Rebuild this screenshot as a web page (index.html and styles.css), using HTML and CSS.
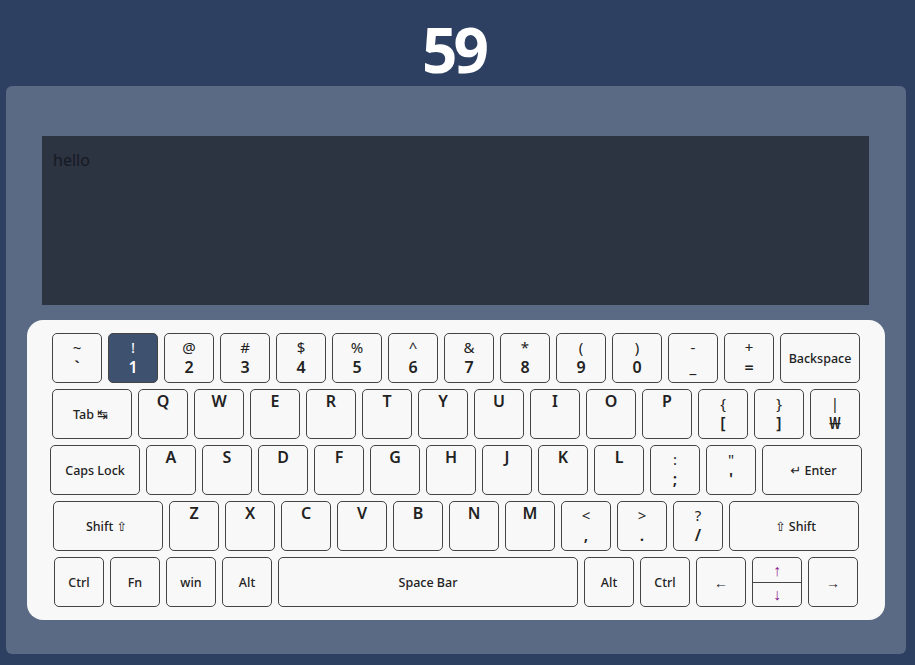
FILE: index.html
```html
<!DOCTYPE html>
<html lang="en">
<head>
<meta charset="utf-8">
<title>Typing</title>
<link rel="stylesheet" href="styles.css">
</head>
<body>
<div class="title">59</div>
<div class="panel">
  <div class="screen">hello</div>
  <div class="keyboard">
    <div class="row">
      <div class="key dual"><span class="top">~</span><span class="bot">`</span></div>
      <div class="key dual active"><span class="top">!</span><span class="bot">1</span></div>
      <div class="key dual"><span class="top">@</span><span class="bot">2</span></div>
      <div class="key dual"><span class="top">#</span><span class="bot">3</span></div>
      <div class="key dual"><span class="top">$</span><span class="bot">4</span></div>
      <div class="key dual"><span class="top">%</span><span class="bot">5</span></div>
      <div class="key dual"><span class="top">^</span><span class="bot">6</span></div>
      <div class="key dual"><span class="top">&amp;</span><span class="bot">7</span></div>
      <div class="key dual"><span class="top">*</span><span class="bot">8</span></div>
      <div class="key dual"><span class="top">(</span><span class="bot">9</span></div>
      <div class="key dual"><span class="top">)</span><span class="bot">0</span></div>
      <div class="key dual"><span class="top">-</span><span class="bot">_</span></div>
      <div class="key dual"><span class="top">+</span><span class="bot">=</span></div>
      <div class="key fn w80">Backspace</div>
    </div>
    <div class="row">
      <div class="key fn w80">Tab <span class="sym">↹</span></div>
      <div class="key letter">Q</div>
      <div class="key letter">W</div>
      <div class="key letter">E</div>
      <div class="key letter">R</div>
      <div class="key letter">T</div>
      <div class="key letter">Y</div>
      <div class="key letter">U</div>
      <div class="key letter">I</div>
      <div class="key letter">O</div>
      <div class="key letter">P</div>
      <div class="key dual"><span class="top">{</span><span class="bot">[</span></div>
      <div class="key dual"><span class="top">}</span><span class="bot">]</span></div>
      <div class="key dual"><span class="top">|</span><span class="bot">₩</span></div>
    </div>
    <div class="row">
      <div class="key fn w90">Caps Lock</div>
      <div class="key letter">A</div>
      <div class="key letter">S</div>
      <div class="key letter">D</div>
      <div class="key letter">F</div>
      <div class="key letter">G</div>
      <div class="key letter">H</div>
      <div class="key letter">J</div>
      <div class="key letter">K</div>
      <div class="key letter">L</div>
      <div class="key dual"><span class="top">:</span><span class="bot">;</span></div>
      <div class="key dual"><span class="top">"</span><span class="bot">'</span></div>
      <div class="key fn w100"><span class="sym">↵</span> Enter</div>
    </div>
    <div class="row">
      <div class="key fn w110">Shift <span class="sym">⇧</span></div>
      <div class="key letter">Z</div>
      <div class="key letter">X</div>
      <div class="key letter">C</div>
      <div class="key letter">V</div>
      <div class="key letter">B</div>
      <div class="key letter">N</div>
      <div class="key letter">M</div>
      <div class="key dual"><span class="top">&lt;</span><span class="bot">,</span></div>
      <div class="key dual"><span class="top">&gt;</span><span class="bot">.</span></div>
      <div class="key dual"><span class="top">?</span><span class="bot">/</span></div>
      <div class="key fn w130"><span class="sym">⇧</span> Shift</div>
    </div>
    <div class="row">
      <div class="key fn">Ctrl</div>
      <div class="key fn">Fn</div>
      <div class="key fn">win</div>
      <div class="key fn">Alt</div>
      <div class="key fn w300">Space Bar</div>
      <div class="key fn">Alt</div>
      <div class="key fn">Ctrl</div>
      <div class="key fn arrow">←</div>
      <div class="key updown"><span class="half">↑</span><span class="half">↓</span></div>
      <div class="key fn arrow">→</div>
    </div>
  </div>
</div>
</body>
</html>
```
FILE: styles.css
```css
html, body {
  margin: 0;
  padding: 0;
}
body {
  background: #2d4062;
  font-family: "Noto Sans", "Open Sans", sans-serif;
  color: #222;
  height: 665px;
  overflow: hidden;
}
.title {
  box-sizing: border-box;
  height: 86px;
  margin: 0 10px 0 2px;
  padding-top: 18px;
  text-align: center;
  color: #ffffff;
  font-size: 62px;
  font-weight: 700;
  line-height: 1;
  letter-spacing: -4px;
}
.panel {
  box-sizing: border-box;
  margin: 0 9px 0 6px;
  height: 568px;
  background: #5a6a84;
  border-radius: 6px;
  padding: 50px 21px 34px;
}
.screen {
  box-sizing: border-box;
  height: 169px;
  margin: 0 16px 15px 15px;
  background: #2c3341;
  color: #161a22;
  font-size: 16px;
  padding: 13px 11px;
}
.keyboard {
  box-sizing: border-box;
  height: 300px;
  background: #f8f8f8;
  border-radius: 16px;
  padding: 13px 0;
  display: flex;
  flex-direction: column;
  gap: 6px;
}
.row {
  display: flex;
  justify-content: center;
  gap: 6px;
}
.key {
  box-sizing: border-box;
  width: 50px;
  height: 50px;
  flex: none;
  border: 1px solid #444;
  border-radius: 5px;
  background: #f8f8f8;
  display: flex;
  flex-direction: column;
  align-items: center;
  color: #222;
}
.dual {
  justify-content: center;
  padding-bottom: 2px;
}
.dual .top {
  font-size: 15px;
  line-height: 20px;
  font-weight: 400;
}
.dual .bot {
  font-size: 16px;
  line-height: 20px;
  font-weight: 600;
}
.letter {
  justify-content: flex-start;
  font-size: 16px;
  font-weight: 600;
  line-height: 20px;
  padding-top: 1px;
}
.fn {
  justify-content: center;
  flex-direction: row;
  font-size: 12.5px;
  font-weight: 500;
}
.sym {
  margin: 0 3px;
  font-family: "DejaVu Sans", sans-serif;
  font-size: 13px;
  font-weight: 400;
}
.arrow {
  font-size: 14px;
  font-weight: 400;
}
.active {
  background: #3e5270;
  color: #ffffff;
}
.w80 { width: 80px; }
.w90 { width: 90px; }
.w100 { width: 100px; }
.w110 { width: 110px; }
.w130 { width: 130px; }
.w300 { width: 300px; }
.updown {
  justify-content: stretch;
}
.updown .half {
  flex: 1;
  width: 100%;
  display: flex;
  align-items: center;
  justify-content: center;
  color: #8a1a8a;
  font-size: 16px;
}
.updown .half + .half {
  border-top: 1px solid #444;
}
```
